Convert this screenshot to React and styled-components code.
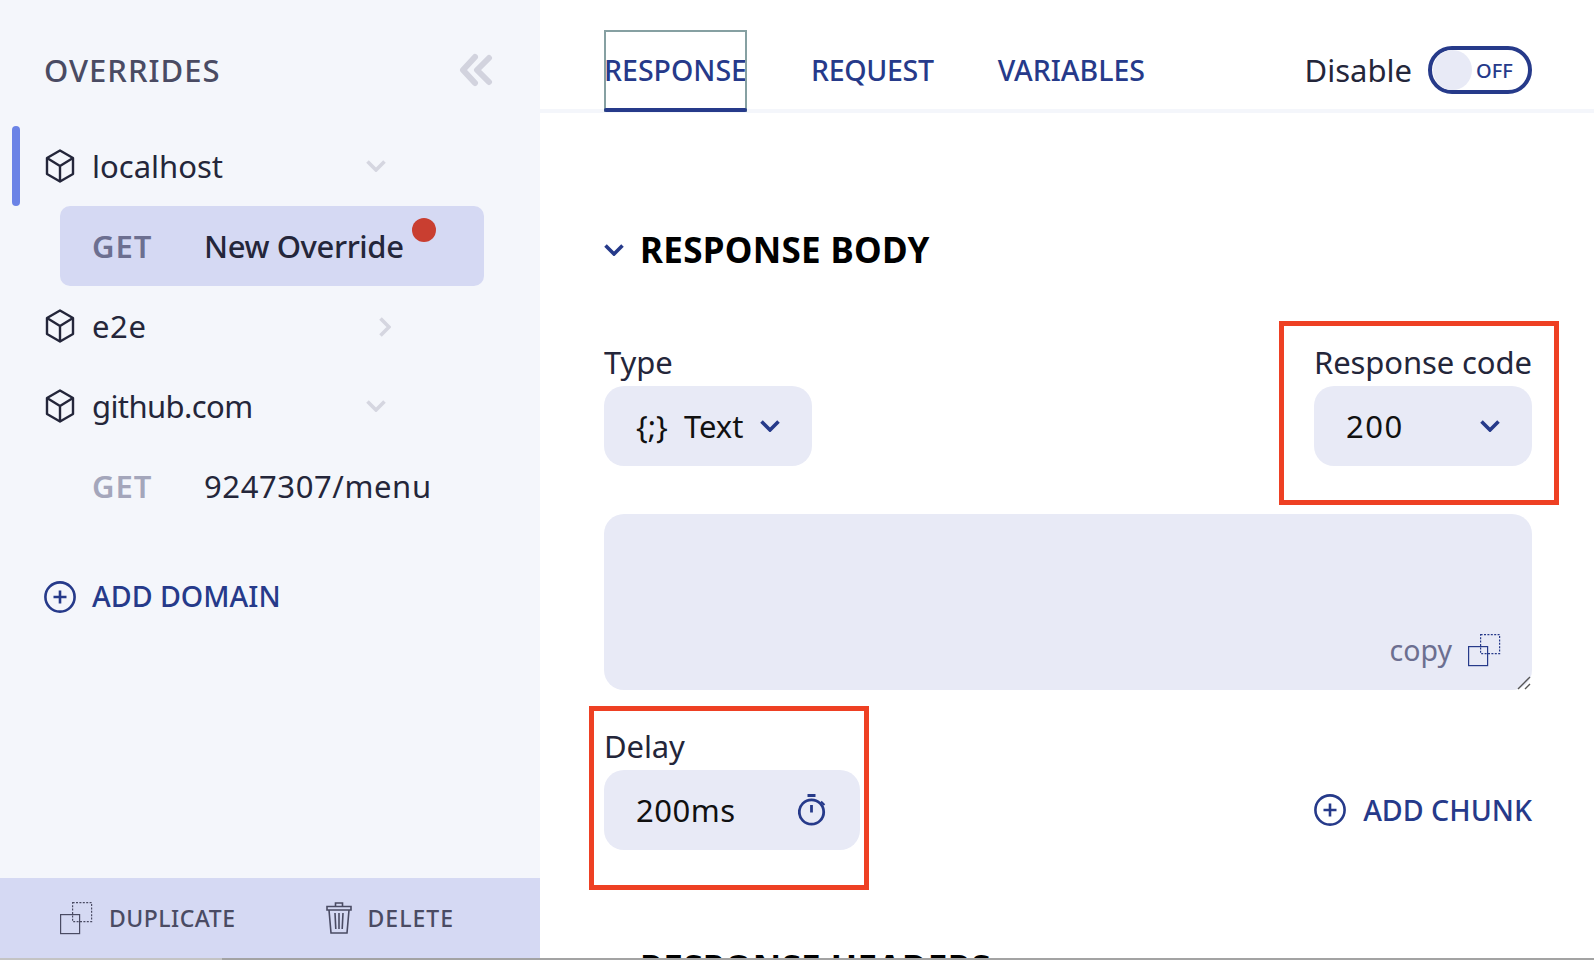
import React from "react";
import styled, { createGlobalStyle } from "styled-components";

const GlobalStyle = createGlobalStyle`
  html, body {
    margin: 0;
    padding: 0;
    background: #fff;
    overflow: hidden;
  }
  body {
    font-family: "Noto Sans", "Open Sans", sans-serif;
    color: #24263a;
  }
  * {
    box-sizing: border-box;
  }
`;

const NAVY = "#263a8a";

function CubeIcon() {
  return (
    <svg width="30" height="34" viewBox="0 0 30 34" fill="none" stroke="#24263a" strokeWidth="2.4" strokeLinejoin="round">
      <path d="M15 1.5 L28 9 V25 L15 32.5 L2 25 V9 Z" />
      <path d="M2 9 L15 17 L28 9 M15 17 V32.5" />
    </svg>
  );
}

function Chevron({ size = 20, color = NAVY, weight = 3.6, dir = "down" }) {
  const down = "M1.5 1.5 L10 10 L18.5 1.5";
  const right = "M1.5 1.5 L10 10 L1.5 18.5";
  return (
    <svg width={dir === "down" ? size : size * 0.6} height={dir === "down" ? size * 0.6 : size} viewBox={dir === "down" ? "0 0 20 12" : "0 0 12 20"} fill="none" stroke={color} strokeWidth={weight}>
      <path d={dir === "down" ? down : right} />
    </svg>
  );
}

function CollapseIcon() {
  return (
    <svg width="34" height="34" viewBox="0 0 34 34" fill="none" stroke="#d2d3de" strokeWidth="6" strokeLinecap="round" strokeLinejoin="round">
      <path d="M16 4 L4 17 L16 30" />
      <path d="M30 5 L18 17 L30 29" />
    </svg>
  );
}

function PlusCircle() {
  return (
    <svg width="32" height="32" viewBox="0 0 32 32" fill="none" stroke={NAVY} strokeWidth="2.6">
      <circle cx="16" cy="16" r="14.6" />
      <path d="M16 9.5 V22.5 M9.5 16 H22.5" />
    </svg>
  );
}

function CopyIcon({ color = NAVY }) {
  return (
    <svg width="33" height="33" viewBox="0 0 33 33" fill="none" stroke={color} strokeWidth="1.2">
      <rect x="12.6" y="0.6" width="19" height="19" strokeDasharray="2 1.4" />
      <rect x="0.6" y="12.6" width="19" height="19" />
    </svg>
  );
}

function TrashIcon() {
  return (
    <svg width="26" height="32" viewBox="0 0 26 32" fill="none" stroke="#4a4b63" strokeWidth="1.6">
      <path d="M9.5 4 V1 H16.5 V4" />
      <path d="M1 4.5 H25 V8 H1 Z" />
      <path d="M3 8 L5 31 H21 L23 8" />
      <path d="M9 11 L9.8 27 M13 11 V27 M17 11 L16.2 27" />
    </svg>
  );
}

function TimerIcon() {
  return (
    <svg width="28" height="32" viewBox="0 0 28 32" fill="none" stroke={NAVY} strokeWidth="2.8">
      <path d="M9.5 1.5 H17.5" strokeWidth="3" />
      <circle cx="13.5" cy="18" r="12.2" />
      <path d="M13.5 11 V18.5" />
      <path d="M23 7.5 L26.5 11" strokeWidth="2" />
    </svg>
  );
}

export default function App() {
  return (
    <Page>
      <GlobalStyle />
      <Sidebar>
        <SideHead>
          <SideTitle>OVERRIDES</SideTitle>
          <CollapseIcon />
        </SideHead>
        <Tree>
          <Row $marked>
            <CubeIcon />
            <Domain>localhost</Domain>
            <Caret $left={366}>
              <Chevron color="#d5d6e0" />
            </Caret>
          </Row>
          <Row $active>
            <Method $strong>GET</Method>
            <RowName $medium $track={-0.4}>New Override</RowName>
            <Dot />
          </Row>
          <Row>
            <CubeIcon />
            <Domain $track={0.6}>e2e</Domain>
            <Caret $left={379} $down={1}>
              <Chevron color="#d5d6e0" dir="right" />
            </Caret>
          </Row>
          <Row>
            <CubeIcon />
            <Domain $track={-0.6}>github.com</Domain>
            <Caret $left={366}>
              <Chevron color="#d5d6e0" />
            </Caret>
          </Row>
          <Row $child>
            <Method>GET</Method>
            <RowName $track={0.6}>9247307/menu</RowName>
          </Row>
        </Tree>
        <AddDomain>
          <PlusCircle />
          <AddLabel>ADD DOMAIN</AddLabel>
        </AddDomain>
        <SideFooter>
          <FooterAction $track={0.5}>
            <CopyIcon color="#4a4b63" />
            DUPLICATE
          </FooterAction>
          <FooterAction $track={1}>
            <TrashIcon />
            DELETE
          </FooterAction>
        </SideFooter>
      </Sidebar>
      <Main>
        <TopBar>
          <Tabs>
            <Tab $selected>RESPONSE</Tab>
            <Tab $track={-0.3}>REQUEST</Tab>
            <Tab>VARIABLES</Tab>
          </Tabs>
          <DisableWrap>
            Disable
            <Toggle>
              <Thumb />
              <ToggleText>OFF</ToggleText>
            </Toggle>
          </DisableWrap>
        </TopBar>
        <Content>
          <SectionHead>
            <Chevron />
            <SectionTitle>RESPONSE BODY</SectionTitle>
          </SectionHead>
          <FieldRow>
            <Field>
              <FieldLabel>Type</FieldLabel>
              <TypeSelect>
                <span>{"{;}"}</span>
                <TypeText>Text</TypeText>
                <Chevron />
              </TypeSelect>
            </Field>
            <Field $marked>
              <FieldLabel>Response code</FieldLabel>
              <CodeSelect>
                200
                <Chevron />
              </CodeSelect>
            </Field>
          </FieldRow>
          <BodyBox>
            <CopyRow>
              <CopyText>copy</CopyText>
              <CopyIcon />
            </CopyRow>
            <Resizer width="14" height="14" viewBox="0 0 14 14" stroke="#555" strokeWidth="1.4">
              <path d="M1 13 L13 1 M8 13 L13 8" />
            </Resizer>
          </BodyBox>
          <DelayRow>
            <Field $marked $delay>
              <FieldLabel>Delay</FieldLabel>
              <DelayInput>
                200ms
                <TimerIcon />
              </DelayInput>
            </Field>
            <AddChunk>
              <PlusCircle />
              <AddLabel>ADD CHUNK</AddLabel>
            </AddChunk>
          </DelayRow>
          <SectionHead $next>
            <Chevron />
            <SectionTitle>RESPONSE HEADERS</SectionTitle>
          </SectionHead>
        </Content>
      </Main>
      <BottomEdge>
        <BottomThumb />
      </BottomEdge>
    </Page>
  );
}

const Page = styled.div`
  display: grid;
  grid-template-columns: 540px 1fr;
  grid-template-rows: 958px 2px;
  width: 1594px;
  height: 960px;
  overflow: hidden;
`;

const Sidebar = styled.aside`
  display: flex;
  flex-direction: column;
  background: #f4f6fb;
`;

const SideHead = styled.div`
  display: flex;
  justify-content: space-between;
  align-items: center;
  height: 127px;
  padding: 13px 47px 0 44px;
  margin-bottom: -1px;
`;

const SideTitle = styled.h2`
  margin: 0;
  font-size: 31px;
  font-weight: 500;
  letter-spacing: 1px;
  color: #4a4b63;
`;

const Tree = styled.div`
  display: flex;
  flex-direction: column;
`;

const Row = styled.div`
  position: relative;
  display: flex;
  align-items: center;
  height: 80px;
  margin-left: ${(p) => (p.$active ? "60px" : "0")};
  margin-right: ${(p) => (p.$active ? "56px" : "0")};
  padding-left: ${(p) => (p.$active ? "32px" : p.$child ? "92px" : "45px")};
  background: ${(p) => (p.$active ? "#d5d9f3" : "transparent")};
  border-radius: ${(p) => (p.$active ? "10px" : "0")};

  &::before {
    content: ${(p) => (p.$marked ? '""' : "none")};
    position: absolute;
    left: 12px;
    top: 0;
    width: 8px;
    height: 80px;
    border-radius: 4px;
    background: #6b83e6;
  }
`;

const Domain = styled.span`
  margin-left: 17px;
  font-size: 31px;
  letter-spacing: ${(p) => p.$track || 0}px;
`;

const Caret = styled.span`
  position: absolute;
  left: ${(p) => p.$left}px;
  top: calc(50% + ${(p) => p.$down || 0}px);
  transform: translateY(-50%);
  display: flex;
`;

const Method = styled.span`
  width: 112px;
  flex: none;
  font-size: 31px;
  font-weight: 600;
  letter-spacing: 1px;
  color: ${(p) => (p.$strong ? "#6c6f90" : "#a4a6bb")};
`;

const RowName = styled.span`
  font-size: 31px;
  font-weight: ${(p) => (p.$medium ? 500 : 400)};
  letter-spacing: ${(p) => p.$track || 0}px;
`;

const Dot = styled.span`
  position: absolute;
  top: 12px;
  left: 352px;
  width: 24px;
  height: 24px;
  border-radius: 50%;
  background: #c93e30;
`;

const AddDomain = styled.div`
  display: flex;
  align-items: center;
  gap: 16px;
  margin: 52px 0 0 44px;
`;

const AddLabel = styled.span`
  margin-top: -2px;
  font-size: 28.6px;
  font-weight: 500;
  color: ${NAVY};
`;

const SideFooter = styled.div`
  display: flex;
  align-items: center;
  gap: 90px;
  height: 80px;
  margin-top: auto;
  padding-left: 60px;
  background: #d5d9f3;
`;

const FooterAction = styled.div`
  display: flex;
  align-items: center;
  gap: 16px;
  font-size: 23px;
  font-weight: 500;
  letter-spacing: ${(p) => p.$track}px;
  color: #4a4b63;
`;

const Main = styled.main`
  display: flex;
  flex-direction: column;
  overflow: hidden;
`;

const TopBar = styled.header`
  flex: none;
  display: flex;
  justify-content: space-between;
  align-items: flex-end;
  height: 113px;
  padding: 0 62px 0 64px;
  border-bottom: 4px solid #f4f6fb;
`;

const Tabs = styled.nav`
  display: flex;
  gap: 64px;
`;

const Tab = styled.div`
  position: relative;
  display: flex;
  align-items: center;
  height: 82px;
  margin-bottom: -3px;
  padding: 2px 0 4px;
  font-size: 28.5px;
  font-weight: 500;
  letter-spacing: ${(p) => p.$track || 0}px;
  color: ${NAVY};
  outline: ${(p) => (p.$selected ? "2px solid #86a0a2" : "0")};
  outline-offset: -2px;

  &::after {
    content: ${(p) => (p.$selected ? '""' : "none")};
    position: absolute;
    left: 0;
    right: 0;
    bottom: 0;
    height: 4px;
    border-radius: 2px;
    background: ${NAVY};
  }
`;

const DisableWrap = styled.div`
  display: flex;
  align-items: center;
  gap: 16px;
  align-self: flex-start;
  margin-top: 46px;
  font-size: 31px;
`;

const Toggle = styled.div`
  display: flex;
  align-items: center;
  gap: 4px;
  width: 104px;
  height: 48px;
  padding-left: 1px;
  border: 4px solid ${NAVY};
  border-radius: 24px;
`;

const Thumb = styled.span`
  width: 39px;
  height: 40px;
  border-radius: 50%;
  background: #e8eaf6;
`;

const ToggleText = styled.span`
  font-size: 20px;
  font-weight: 500;
  color: ${NAVY};
`;

const Content = styled.div`
  flex: none;
  display: flex;
  flex-direction: column;
  padding: 0 62px 0 64px;
`;

const SectionHead = styled.div`
  display: flex;
  align-items: center;
  gap: 16px;
  margin-top: ${(p) => (p.$next ? "96px" : "115px")};
`;

const SectionTitle = styled.h3`
  margin: 0;
  font-size: 35px;
  font-weight: 700;
  letter-spacing: 0.3px;
  line-height: 44px;
  color: #000;
`;

const FieldRow = styled.div`
  display: flex;
  justify-content: space-between;
  margin-top: 68px;
`;

const Field = styled.div`
  position: relative;
  display: flex;
  flex-direction: column;

  &::after {
    content: ${(p) => (p.$marked ? '""' : "none")};
    position: absolute;
    top: ${(p) => (p.$delay ? "-18px" : "-19px")};
    bottom: ${(p) => (p.$delay ? "-40px" : "-39px")};
    left: ${(p) => (p.$delay ? "-15px" : "-35px")};
    right: ${(p) => (p.$delay ? "-9px" : "-27px")};
    border: 5px solid #ee4023;
    pointer-events: none;
  }
`;

const FieldLabel = styled.label`
  margin-bottom: 2px;
  font-size: 31px;
  line-height: 44px;
  letter-spacing: -0.1px;
  white-space: nowrap;
`;

const SelectBox = styled.div`
  display: flex;
  align-items: center;
  height: 80px;
  background: #e8eaf6;
  border-radius: 20px;
  font-size: 31px;
  color: #111;
`;

const TypeSelect = styled(SelectBox)`
  width: 208px;
  padding-left: 32px;
`;

const TypeText = styled.span`
  margin: 0 17px 0 16px;
`;

const CodeSelect = styled(SelectBox)`
  justify-content: space-between;
  width: 218px;
  padding: 0 32px;
  letter-spacing: 1.5px;
`;

const BodyBox = styled.div`
  position: relative;
  display: flex;
  justify-content: flex-end;
  align-items: flex-end;
  height: 176px;
  margin-top: 48px;
  padding: 0 31px 21px 0;
  background: #e8eaf6;
  border-radius: 20px;
`;

const CopyRow = styled.div`
  display: flex;
  align-items: center;
  gap: 16px;
`;

const CopyText = styled.span`
  font-size: 28.5px;
  color: #6c6f90;
`;

const Resizer = styled.svg`
  position: absolute;
  right: 1px;
  bottom: 0;
`;

const DelayRow = styled.div`
  display: flex;
  justify-content: space-between;
  align-items: flex-end;
  margin-top: 34px;
`;

const DelayInput = styled(SelectBox)`
  justify-content: space-between;
  width: 256px;
  padding: 0 34px 0 32px;
  letter-spacing: 0.5px;
`;

const AddChunk = styled.div`
  display: flex;
  align-items: center;
  gap: 17px;
  height: 80px;
`;

const BottomEdge = styled.div`
  grid-column: 1 / -1;
  display: flex;
  background: #a3a3a3;
`;

const BottomThumb = styled.div`
  width: 222px;
  background: #c4c4c4;
`;
